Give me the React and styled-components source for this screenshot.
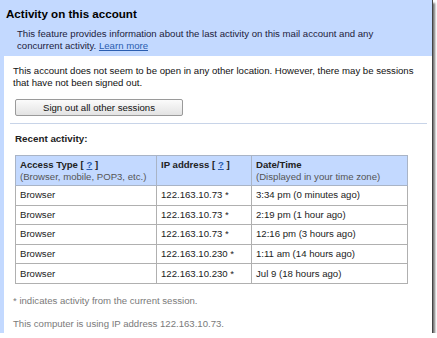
import React from "react";
import styled, { createGlobalStyle } from "styled-components";

const GlobalStyle = createGlobalStyle`
  html, body {
    margin: 0;
    padding: 0;
    background: #ffffff;
  }
  body {
    font-family: "Liberation Sans", Arial, sans-serif;
  }
`;

const Frame = styled.div`
  width: 432px;
  height: 333px;
  background: #c3d9ff;
  box-shadow: 1px 0 0 #444, 0 1px 0 #444, 3px 3px 2px rgba(0, 0, 0, 0.55);
  display: flex;
  flex-direction: column;
  overflow: hidden;
`;

const Header = styled.div`
  padding: 6px 6px 4px 6px;
`;

const Title = styled.h1`
  margin: 0;
  font-size: 11.6px;
  font-weight: 700;
  color: #000;
  line-height: 16px;
`;

const Description = styled.p`
  margin: 6px 0 0 11px;
  font-size: 9.6px;
  line-height: 12px;
  color: #1c1c3c;
`;

const Link = styled.a`
  color: #2a5db0;
  text-decoration: underline;
`;

const Body = styled.div`
  flex: 1;
  margin-left: 4px;
  background: #ffffff;
  padding: 9px 5px 0 9px;
  display: flex;
  flex-direction: column;
`;

const Text = styled.p`
  margin: 0;
  font-size: 9.6px;
  line-height: 12px;
  color: ${(p) => (p.$muted ? "#7a7a7a" : "#111")};
`;

const Button = styled.button`
  margin: 10px 0 0 2px;
  width: 168px;
  height: 17px;
  padding: 0;
  font-family: "Liberation Sans", Arial, sans-serif;
  font-size: 9.6px;
  color: #111;
  border: 1px solid #9a9a9a;
  border-radius: 2px;
  background: linear-gradient(#fbfbfb, #e3e3e3);
`;

const Separator = styled.hr`
  margin: 7px 0 0 -3px;
  border: none;
  border-top: 1px solid #c8d4e8;
`;

const SectionTitle = styled.h2`
  margin: 9px 0 0 2px;
  font-size: 9.8px;
  font-weight: 700;
  line-height: 12px;
  color: #222;
`;

const Table = styled.table`
  margin: 10px 0 0 2px;
  width: 393px;
  table-layout: fixed;
  border-collapse: collapse;
  font-size: 9.6px;
  color: #222;
`;

const HeadCell = styled.th`
  background: #c3d9ff;
  border: 1px solid #a9b4c6;
  text-align: left;
  vertical-align: top;
  font-weight: 400;
  padding: 3px 4px 3px 4px;
  line-height: 11.5px;
  width: ${(p) => (p.$width ? `${p.$width}px` : "auto")};
  color: #555;
`;

const HeadLabel = styled.div`
  font-weight: 700;
  color: #222;
`;

const Help = styled.a`
  color: #2a5db0;
  text-decoration: underline;
`;

const Cell = styled.td`
  border: 1px solid #b0b0b0;
  padding: 0 4px;
  height: 18.6px;
  line-height: 12px;
  white-space: nowrap;
`;

const Footer = styled.div`
  margin-top: 11px;
  display: flex;
  flex-direction: column;
  gap: 11px;
`;

const rows = [
  ["Browser", "122.163.10.73 *", "3:34 pm (0 minutes ago)"],
  ["Browser", "122.163.10.73 *", "2:19 pm (1 hour ago)"],
  ["Browser", "122.163.10.73 *", "12:16 pm (3 hours ago)"],
  ["Browser", "122.163.10.230 *", "1:11 am (14 hours ago)"],
  ["Browser", "122.163.10.230 *", "Jul 9 (18 hours ago)"],
];

export default function App() {
  return (
    <>
      <GlobalStyle />
      <Frame>
        <Header>
          <Title>Activity on this account</Title>
          <Description>
            This feature provides information about the last activity on this mail account and any
            <br />
            concurrent activity. <Link href="#">Learn more</Link>
          </Description>
        </Header>
        <Body>
          <Text>
            This account does not seem to be open in any other location. However, there may be sessions
            <br />
            that have not been signed out.
          </Text>
          <Button>Sign out all other sessions</Button>
          <Separator />
          <SectionTitle>Recent activity:</SectionTitle>
          <Table>
            <thead>
              <tr>
                <HeadCell $width={132}>
                  <HeadLabel>
                    Access Type [ <Help href="#">?</Help> ]
                  </HeadLabel>
                  (Browser, mobile, POP3, etc.)
                </HeadCell>
                <HeadCell $width={86}>
                  <HeadLabel>
                    IP address [ <Help href="#">?</Help> ]
                  </HeadLabel>
                </HeadCell>
                <HeadCell>
                  <HeadLabel>Date/Time</HeadLabel>
                  (Displayed in your time zone)
                </HeadCell>
              </tr>
            </thead>
            <tbody>
              {rows.map((r, i) => (
                <tr key={i}>
                  {r.map((c, j) => (
                    <Cell key={j}>{c}</Cell>
                  ))}
                </tr>
              ))}
            </tbody>
          </Table>
          <Footer>
            <Text $muted>* indicates activity from the current session.</Text>
            <Text $muted>This computer is using IP address 122.163.10.73.</Text>
          </Footer>
        </Body>
      </Frame>
    </>
  );
}
